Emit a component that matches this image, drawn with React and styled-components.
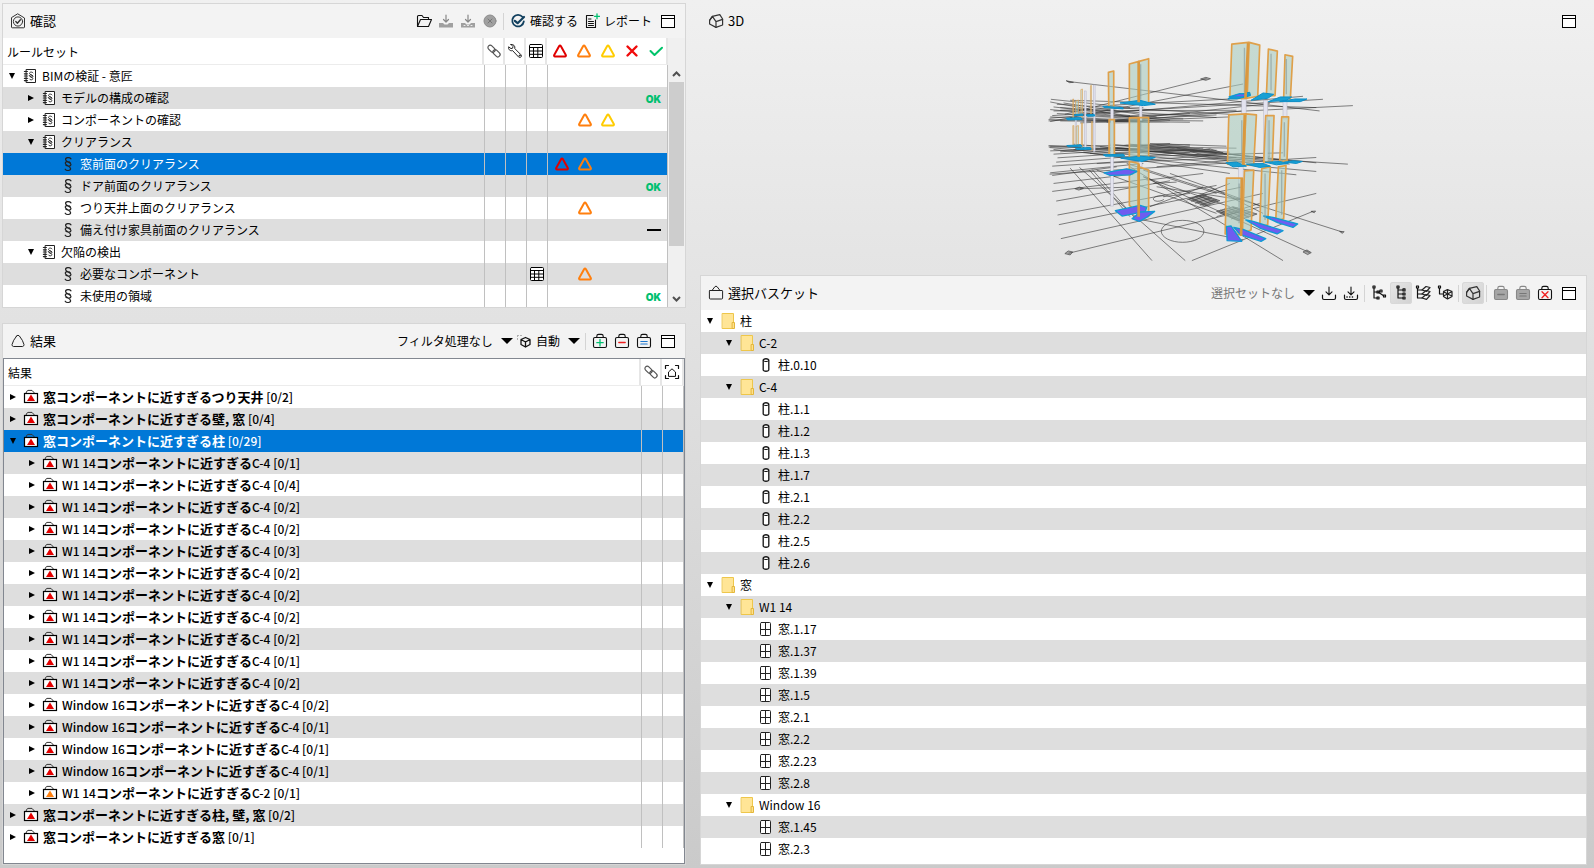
import React from 'react';
import styled, { createGlobalStyle, css } from 'styled-components';

const GlobalStyle = createGlobalStyle`
  * {
    box-sizing: border-box;
  }
  body {
    margin: 0;
    color: #000;
    font-family: 'Noto Sans CJK JP', sans-serif;
    font-size: 12px;
    line-height: 20px;
  }
  button,
  select {
    margin: 0;
    padding: 0;
    border: 0;
    background: none;
    color: inherit;
    font: inherit;
  }
  svg {
    display: block;
    flex: none;
  }
`;

/* ---------- icons ---------- */

function Icon({ children, size = 16, ...rest }) {
  return (
    <svg
      width={size}
      height={size}
      viewBox="0 0 16 16"
      fill="none"
      stroke="#111"
      strokeLinecap="round"
      strokeLinejoin="round"
      aria-hidden="true"
      {...rest}
    >
      {children}
    </svg>
  );
}

const CheckingIcon = () => (
  <Icon stroke="#333">
    <path d="M8 1 L14.5 5 V14 a.8 .8 0 0 1 -.8 .8 H2.3 a.8 .8 0 0 1 -.8 -.8 V5 Z" />
    <circle cx="8" cy="8.5" r="4.6" />
    <path d="M5.8 8.6 L7.4 10.2 L10.4 6.8" strokeWidth="1.4" />
  </Icon>
);
const FolderOpenIcon = () => (
  <Icon strokeWidth="1.1">
    <path d="M1.5 13.5 V3.5 a1 1 0 0 1 1-1 H6 L7.5 4.5 H12.5 V6.5 M1.5 13.5 L4.5 6.5 H15.5 L12.5 13.5 Z" />
  </Icon>
);
const DisabledDownloadIcon = ({ dots }) => (
  <Icon stroke="#888">
    <path d="M8 2 V9 M5.5 6.5 L8 9 L10.5 6.5" strokeWidth="1.2" />
    <path d="M1 10 H5 L6.5 11.5 H9.5 L11 10 H15 V14.5 H1 Z" fill="#a0a0a0" stroke="none" />
    {dots && <path d="M4 12.5 H12" stroke="#eee" strokeDasharray="1 2.5" />}
  </Icon>
);
const DownloadIcon = ({ dots }) => (
  <Icon>
    <path d="M8 2 V9.5 M5 6.8 L8 9.8 L11 6.8" strokeWidth="1.1" />
    <path d="M1.5 10 V13 a1.5 1.5 0 0 0 1.5 1.5 H13 a1.5 1.5 0 0 0 1.5 -1.5 V10" strokeWidth="1.2" />
    {dots && <path d="M4 12 H12" strokeWidth="1.6" strokeDasharray=".1 2.6" />}
  </Icon>
);
const StopIcon = () => (
  <Icon>
    <circle cx="8" cy="8" r="6" fill="#a0a0a0" stroke="#8c8c8c" />
    <path d="M6 6 L10 10 M10 6 L6 10" stroke="#777" />
  </Icon>
);
const CheckIcon = () => (
  <Icon stroke="#12405f">
    <path d="M12.6 4 A5.8 5.8 0 1 0 13.8 8.5" strokeWidth="1.8" />
    <path d="M4.8 7.8 L7.6 10.2 L14 4" strokeWidth="2.2" />
  </Icon>
);
const ReportIcon = () => (
  <Icon>
    <path d="M9 2.5 H2.5 V14.5 H11.5 V7" strokeWidth="1.1" />
    <path d="M4.5 6 H7 M4.5 8.5 H9.5 M4.5 10.5 H9.5 M4.5 12.5 H9.5" />
    <path d="M13 .8 V5.8 M10.5 3.3 H15.5" stroke="#00c070" strokeWidth="1.3" />
  </Icon>
);
const WindowIcon = () => (
  <Icon strokeLinejoin="miter" shapeRendering="crispEdges" stroke="#000">
    <path d="M1.5 2.5 H14.5 V14.5 H1.5 Z M1.5 5.5 H14.5" fill="#fff" />
  </Icon>
);
const LinkIcon = () => (
  <Icon stroke="#555" strokeWidth="1.2">
    <rect x="1.4" y="3.4" width="8.2" height="4.6" rx="2.3" transform="rotate(45 5.5 5.7)" />
    <rect x="6.4" y="8" width="8.2" height="4.6" rx="2.3" transform="rotate(45 10.5 10.3)" />
  </Icon>
);
const WrenchIcon = () => (
  <Icon stroke="#222">
    <path d="M4 1.4 L6 3.6 L5.6 5.2 L4 5.6 L1.6 3.8 C1 6 2.8 8.4 5.6 7.6 L11.6 14 C13.2 15.4 15.4 13.4 14 11.8 L7.8 5.6 C8.4 3 6.4 1 4 1.4 Z" />
    <circle cx="12.6" cy="12.6" r=".5" />
  </Icon>
);
const GridIcon = () => (
  <Icon strokeLinejoin="miter" stroke="#000">
    <rect x="1.5" y="1.5" width="13" height="13" rx="1" fill="#fff" />
    <path d="M1.5 4.5 H14.5 M1.5 8 H14.5 M1.5 11.3 H14.5 M5.5 4.5 V14.5 M9.8 4.5 V14.5" />
  </Icon>
);
const TriangleIcon = ({ color }) => (
  <Icon stroke={color} strokeWidth="2">
    <path d="M7.2 3 L2.2 12 a1 1 0 0 0 .8 1.5 H13 a1 1 0 0 0 .8 -1.5 L8.8 3 a1 1 0 0 0 -1.6 0 Z" />
  </Icon>
);
const CrossIcon = () => (
  <Icon stroke="#f00a0a" strokeWidth="2.4">
    <path d="M3.5 3.5 L12.5 12.5 M12.5 3.5 L3.5 12.5" />
  </Icon>
);
const TickIcon = () => (
  <Icon stroke="#00c46a" strokeWidth="2">
    <path d="M2.5 8 L6.5 12 L14 4.8" />
  </Icon>
);
const ResultsIcon = () => (
  <Icon stroke="#222">
    <path d="M6.6 3 a1.8 1.8 0 0 1 2.8 0 Q13 7.4 14 11.6 a1.8 1.8 0 0 1 -1.4 1.9 H3.4 a1.8 1.8 0 0 1 -1.4 -1.9 Q3 7.4 6.6 3 Z" />
  </Icon>
);
const AutoIcon = () => (
  <Icon>
    <path d="M1.5 2.5 H7 M1.5 2.5 V8" stroke="#aaa" strokeDasharray="1 2" />
    <path d="M9.5 4.5 L14 6.5 V11.5 L9.5 14 L5 11.5 V6.5 Z M5 6.5 L9.5 9 L14 6.5 M9.5 9 V14" strokeWidth="1.3" />
  </Icon>
);
const BagIcon = ({ sign, color, disabled }) => (
  <Icon stroke={disabled ? '#888' : '#111'} strokeWidth="1.1">
    <rect x="1.5" y="4.5" width="13" height="10" rx="1.4" fill={disabled ? '#a6a6a6' : 'none'} />
    <path d="M4.8 4.5 V3.2 a1.8 1.8 0 0 1 1.8 -1.8 H9.4 a1.8 1.8 0 0 1 1.8 1.8 V4.5" />
    {sign === 'plus' && <path d="M8 6.5 V13 M4.8 9.7 H11.2" stroke={color} strokeWidth="1.3" />}
    {sign === 'minus' && <path d="M4.8 9.5 H11.2" stroke={color} strokeWidth="1.3" />}
    {sign === 'equal' && <path d="M4.8 8.5 H11.2 M4.8 11 H11.2" stroke={color} />}
    {sign === 'cross' && <path d="M5 6.8 L11 12.8 M11 6.8 L5 12.8" stroke={color} strokeWidth="1.3" />}
  </Icon>
);
const BasketIcon = () => (
  <Icon stroke="#222">
    <path d="M2 5.5 H14 a.6 .6 0 0 1 .6 .6 V13 a1 1 0 0 1 -1 1 H2.4 a1 1 0 0 1 -1 -1 V6.1 a.6 .6 0 0 1 .6 -.6 Z" />
    <path d="M4 5.5 L6.8 1.8 a1.6 1.6 0 0 1 2.4 0 L12 5.5" />
  </Icon>
);
const FocusIcon = () => (
  <Icon>
    <path d="M1.5 4.5 V1.5 H4.5 M11.5 1.5 H14.5 V4.5 M14.5 11.5 V14.5 H11.5 M4.5 14.5 H1.5 V11.5" strokeWidth="1.2" />
    <path d="M4.5 12 V8 L8 4.8 L11.5 8 V12 Z" />
  </Icon>
);
const HouseIcon = () => (
  <Icon stroke="#333" strokeWidth="1.2">
    <path d="M4.4 3.4 L11.8 1.6 L14.6 6 V12 L8 14.4 L1.6 11 V7.4 Z" />
    <path d="M1.6 7.4 L4.4 3.4 L8 8.6 L14.6 6.4 M8 8.6 V14.4" />
  </Icon>
);
const FolderIcon = () => (
  <Icon>
    <path d="M2.5 .5 H13.5 V15.5 H2.5 Z" fill="#ffe596" stroke="#eec64a" />
    <path d="M12.5 9.5 H14.5 V15.5 H12.5 Z" fill="#ffe08a" stroke="#e3b63a" />
  </Icon>
);
const ColumnIcon = () => (
  <Icon strokeWidth="1.3">
    <path d="M5.2 3 a2.9 1.7 0 0 1 5.6 0 V13 a2.9 1.7 0 0 1 -5.6 0 Z" fill="#fff" />
    <path d="M5.2 3.4 a2.9 1.6 0 0 0 5.6 0" strokeWidth="1" />
  </Icon>
);
const WindowItemIcon = () => (
  <Icon stroke="#222">
    <rect x="2.5" y="1.5" width="10" height="13" rx="1" fill="#fff" />
    <path d="M7.5 1.5 V14.5 M2.5 8.5 H12.5" />
  </Icon>
);
const RulesetIcon = () => (
  <Icon stroke="#222">
    <rect x="4.5" y="1.5" width="9" height="13" fill="#fff" />
    <path d="M2.4 3.5 H5.4 M2.4 5.8 H5.4 M2.4 8 H5.4 M2.4 10.3 H5.4 M2.4 12.6 H5.4" strokeWidth="1.2" />
    <path d="M11 4.8 C10 3.4 7.2 4 7.6 5.6 C8 7 11.2 7 11 8.6 C10.8 9.6 8.4 9.4 7.6 8 M7.4 11 C8.4 12.6 11.2 12 10.8 10.4 C10.4 9 7.4 9 7.4 7.6 C7.6 6.4 10 6.6 10.8 7.8" strokeWidth=".9" />
  </Icon>
);
const RuleIcon = () => (
  <Icon stroke="#222" strokeWidth="1.2">
    <path d="M11 2.8 C9.6 1 5.4 1.4 5.6 3.6 C5.8 6.2 11.2 6.2 11 8.8 C10.8 10.8 6.6 10.2 5.8 9.2 M5.2 13.2 C6.4 15.2 10.8 14.8 10.6 12.6 C10.4 10 5 9.4 5.2 7 C5.4 5.2 9.2 5.4 10.4 6.8" />
  </Icon>
);
const IssueIcon = ({ color = '#e30000' }) => (
  <Icon stroke="#000" strokeLinejoin="miter">
    <path d="M3 4 L4.2 1.8 a1 1 0 0 1 .8 -.4 H9 L11.4 4" stroke="#333" />
    <rect x="1.5" y="4.5" width="13" height="9" fill="#fff" strokeWidth="1.2" />
    <path d="M8 5.4 L12 12 H4 Z" fill={color} stroke="none" />
  </Icon>
);
const FlatTreeIcon = () => (
  <Icon strokeWidth="1.2">
    <path d="M3 3 V13 H7 M3 7 H7 L13 11" />
    <path d="M2 1 H4 V3 H2 Z M6 6 H8 V8 H6 Z M6 12 H8 V14 H6 Z M9 5 H11 V7 H9 Z M12.5 10 H14.5 V12 H12.5 Z" />
  </Icon>
);
const TreeIcon = () => (
  <Icon strokeWidth="1.2">
    <path d="M5 3 V13 H10 M5 5 H10 M5 9 H10" />
    <path d="M4 1 H6 V3 H4 Z M10 3.8 H12 V6 H10 Z M10 8 H12 V10 H10 Z M10 12 H12 V14 H10 Z" />
  </Icon>
);
const LayerTreeIcon = () => (
  <Icon strokeWidth="1.2">
    <path d="M2.5 3 V13 H7 M2.5 5 H7 M2.5 9 H7 M1.5 1 H3.5 V3 H1.5 Z" />
    <path d="M7 5 L11 1.5 L15 2.5 L11.5 6.4 Z M7 9 L11 5.5 L15 6.5 L11.5 10.4 Z M7 13 L11 9.5 L15 10.5 L11.5 14.4 Z" stroke="#222" />
  </Icon>
);
const CubeTreeIcon = () => (
  <Icon strokeWidth="1.2">
    <path d="M2.5 3 V9 H6 M1.5 1 H3.5 V3 H1.5 Z" />
    <path d="M10.5 4.5 L15 6.5 V11.5 L10.5 14 L6.5 11.5 V6.5 Z M6.5 6.5 L10.5 9 L15 6.5 M10.5 4.5 V14 M6.5 11 L10.5 9 L15 11" stroke="#222" />
  </Icon>
);

/* ---------- panels ---------- */

const Page = styled.main`
  min-height: 100vh;
  display: grid;
  grid-template-columns: minmax(0, 684fr) minmax(0, 887fr);
  gap: 14px;
  padding: 3px 7px 3px 2px;
  background: linear-gradient(#f0f0f0, #cacaca);
`;
const Column = styled.div`
  display: flex;
  flex-direction: column;
  gap: ${(p) => (p.$joined ? 0 : 15)}px;
`;
const Panel = styled.section`
  display: flex;
  flex-direction: column;
  flex: ${(p) => (p.$grow ? 1 : 'none')};
  border: 1px solid ${(p) => (p.$bare ? 'transparent' : '#d6d6d6')};
  background: ${(p) => (p.$bare ? 'none' : '#fff')};
`;
const PanelHeader = styled.header`
  display: flex;
  align-items: center;
  justify-content: space-between;
  height: 34px;
  padding: 0 6px 0 7px;
  background: ${(p) => (p.$bare ? 'none' : '#f3f3f3')};
`;
const Title = styled.h2`
  display: flex;
  align-items: center;
  gap: 4px;
  margin: 0;
  font-size: 13px;
  font-weight: 400;
`;
const Toolbar = styled.div`
  display: flex;
  align-items: center;
`;
const ToolButton = styled.button`
  display: flex;
  align-items: center;
  justify-content: center;
  width: 22px;
  height: 22px;
  border-radius: 3px;
  ${(p) =>
    p.$active &&
    css`
      background: linear-gradient(135deg, #e6e6e6, #d2d2d2);
      box-shadow: inset 0 0 0 1px #d8d8d8;
    `}
`;
const TextButton = styled.button`
  display: flex;
  align-items: center;
  gap: 4px;
  margin: 0 3px;
`;
const Separator = styled.span`
  width: 1px;
  height: 17px;
  margin: 0 3px 0 2px;
  background: #d4d4d4;
`;
const Gap = styled.span`
  width: 2px;
`;
const Picker = styled.label`
  position: relative;
  display: flex;
  align-items: center;
  gap: 4px;
  margin-right: 3px;
  color: ${(p) => (p.$muted ? '#777' : '#000')};
  select {
    appearance: none;
    padding-right: 19px;
    outline: 0;
  }
`;
const PickerArrow = styled.svg`
  position: absolute;
  right: 0;
  pointer-events: none;
`;

function Select({ icon, label, value, muted }) {
  return (
    <Picker $muted={muted}>
      {icon}
      <select aria-label={label} defaultValue={value}>
        <option>{value}</option>
      </select>
      <PickerArrow width="12" height="6" viewBox="0 0 12 6">
        <path d="M0 0 H12 L6 6 Z" />
      </PickerArrow>
    </Picker>
  );
}

function Tool({ label, active, children }) {
  return (
    <ToolButton type="button" aria-label={label} $active={active}>
      {children}
    </ToolButton>
  );
}

/* ---------- tree tables ---------- */

const rowColor = (p) => (p.$selected ? '#0078d7' : p.$striped ? '#dedede' : '#fff');

const TableArea = styled.div`
  display: flex;
  flex: 1;
  align-items: ${(p) => (p.$framed ? 'flex-start' : 'stretch')};
  ${(p) => p.$framed && 'border: 1px solid #828790; background: #fff;'}
`;
const Table = styled.table`
  flex: 1;
  width: 100%;
  table-layout: fixed;
  border-spacing: 0;
  th,
  td {
    padding: 0;
  }
  th {
    height: 27px;
    border-bottom: 1px solid #ececec;
    border-right: 2px solid #e6e6e6;
    font-weight: 400;
    text-align: left;
  }
  th:first-child {
    padding-top: 1px;
    padding-left: 4px;
  }
  td {
    height: 22px;
    border-left: 1px solid #c0c0c0;
  }
  td:first-child {
    border-left: 0;
  }
  td:last-child {
    border-right: 1px solid #c0c0c0;
  }
`;
const Row = styled.tr`
  background: ${rowColor};
  color: ${(p) => (p.$selected ? '#fff' : '#000')};
`;
const Centered = styled.div`
  display: flex;
  justify-content: center;
`;
const StatusGrid = styled.div`
  display: grid;
  grid-template-columns: repeat(5, ${(p) => (p.$head ? 24 : 23)}px);
  padding-left: ${(p) => (p.$head ? 1 : 2)}px;
  align-items: center;
  justify-items: center;
`;
const StatusSlot = styled.span`
  grid-row: 1;
  grid-column: ${(p) => p.$slot};
`;
const Ok = styled.span`
  display: block;
  padding-top: 1px;
  color: #00c070;
  font: 900 10px/16px Inter, sans-serif;
`;
const Dash = styled.span`
  display: block;
  width: 14px;
  height: 2px;
  background: #000;
`;
const TreeCell = styled.div`
  display: flex;
  align-items: center;
  gap: 4px;
  height: 22px;
  padding-left: ${(p) => 3 + p.$level * 19}px;
  white-space: nowrap;
  ${(p) => p.$bold && 'font-size: 13px; font-weight: 700;'}
`;
const Latin = styled.span`
  font-size: 12px;
  font-weight: 500;
`;
const Expander = styled.button`
  display: flex;
  justify-content: center;
  width: 12px;
`;
const NoExpander = styled.span`
  width: 12px;
`;

function TreeItem({ level, open, icon, bold, children }) {
  return (
    <TreeCell $level={level} $bold={bold}>
      {open === undefined ? (
        <NoExpander />
      ) : (
        <Expander type="button" aria-label={open ? '折りたたむ' : '展開'}>
          <svg width="8" height="8" viewBox="0 0 8 8">
            <path d={open ? 'M1 1 H7 L4 7 Z' : 'M1 1 L7 4 L1 7 Z'} />
          </svg>
        </Expander>
      )}
      {icon}
      <span>{children}</span>
    </TreeCell>
  );
}

const RED = '#e00000';
const ORANGE = '#ff7f0e';
const YELLOW = '#ffcc00';

const rules = [
  { level: 0, open: true, name: 'BIMの検証 - 意匠' },
  { level: 1, open: false, name: 'モデルの構成の確認', status: ['ok'] },
  { level: 1, open: false, name: 'コンポーネントの確認', status: ['orange', 'yellow'] },
  { level: 1, open: true, name: 'クリアランス' },
  { level: 2, name: '窓前面のクリアランス', status: ['red', 'orange'], selected: true },
  { level: 2, name: 'ドア前面のクリアランス', status: ['ok'] },
  { level: 2, name: 'つり天井上面のクリアランス', status: ['orange'] },
  { level: 2, name: '備え付け家具前面のクリアランス', status: ['none'] },
  { level: 1, open: true, name: '欠陥の検出' },
  { level: 2, name: '必要なコンポーネント', status: ['orange'], table: true },
  { level: 2, name: '未使用の領域', status: ['ok'] },
];

const statuses = {
  red: { slot: 1, mark: <TriangleIcon color={RED} /> },
  orange: { slot: 2, mark: <TriangleIcon color={ORANGE} /> },
  yellow: { slot: 3, mark: <TriangleIcon color={YELLOW} /> },
  ok: { slot: 5, mark: <Ok>OK</Ok> },
  none: { slot: 5, mark: <Dash /> },
};

const ScrollBar = styled.div`
  display: flex;
  flex-direction: column;
  align-items: center;
  width: 17px;
  padding: 27px 1px 0 1px;
  background: #f0f0f0;
`;
const ScrollButton = styled.button`
  display: flex;
  align-items: center;
  justify-content: center;
  width: 15px;
  height: 17px;
`;
const ScrollTrack = styled.div`
  flex: 1;
  width: 15px;
`;
const ScrollThumb = styled.div`
  height: 79%;
  background: #cdcdcd;
`;

function ScrollArrow({ down }) {
  return (
    <ScrollButton type="button" aria-label={down ? '下へ' : '上へ'}>
      <svg width="9" height="6" viewBox="0 0 9 6" fill="none" stroke="#505050" strokeWidth="2">
        <path d={down ? 'M1 1 L4.5 4.5 L8 1' : 'M1 5 L4.5 1.5 L8 5'} />
      </svg>
    </ScrollButton>
  );
}

function CheckingPanel() {
  return (
    <Panel>
      <PanelHeader>
        <Title>
          <CheckingIcon />
          確認
        </Title>
        <Toolbar>
          <Tool label="開く"><FolderOpenIcon /></Tool>
          <Tool label="保存"><DisabledDownloadIcon /></Tool>
          <Tool label="名前を付けて保存"><DisabledDownloadIcon dots /></Tool>
          <Tool label="停止"><StopIcon /></Tool>
          <Separator />
          <TextButton type="button">
            <CheckIcon />
            確認する
          </TextButton>
          <TextButton type="button">
            <ReportIcon />
            レポート
          </TextButton>
          <Gap />
          <Tool label="最大化"><WindowIcon /></Tool>
        </Toolbar>
      </PanelHeader>
      <TableArea>
        <Table>
          <colgroup>
            <col />
            <col width="21" />
            <col width="21" />
            <col width="21" />
            <col width="121" />
          </colgroup>
          <thead>
            <tr>
              <th>ルールセット</th>
              <th aria-label="リンク"><Centered><LinkIcon /></Centered></th>
              <th aria-label="設定"><Centered><WrenchIcon /></Centered></th>
              <th aria-label="表"><Centered><GridIcon /></Centered></th>
              <th aria-label="状態">
                <StatusGrid $head>
                  <TriangleIcon color={RED} />
                  <TriangleIcon color={ORANGE} />
                  <TriangleIcon color={YELLOW} />
                  <CrossIcon />
                  <TickIcon />
                </StatusGrid>
              </th>
            </tr>
          </thead>
          <tbody>
            {rules.map((rule, i) => (
              <Row key={rule.name} $striped={i % 2 === 1} $selected={rule.selected}>
                <td>
                  <TreeItem
                    level={rule.level}
                    open={rule.open}
                    icon={rule.open === undefined ? <RuleIcon /> : <RulesetIcon />}
                  >
                    {rule.name}
                  </TreeItem>
                </td>
                <td />
                <td />
                <td>{rule.table && <Centered><GridIcon /></Centered>}</td>
                <td>
                  <StatusGrid>
                    {(rule.status || []).map((s) => (
                      <StatusSlot key={s} $slot={statuses[s].slot}>
                        {statuses[s].mark}
                      </StatusSlot>
                    ))}
                  </StatusGrid>
                </td>
              </Row>
            ))}
          </tbody>
        </Table>
        <ScrollBar>
          <ScrollArrow />
          <ScrollTrack>
            <ScrollThumb />
          </ScrollTrack>
          <ScrollArrow down />
        </ScrollBar>
      </TableArea>
    </Panel>
  );
}

const near = (a, b, count) => ({ a, b, count });
const isLatin = (text) => /^[A-Z]/.test(text);

const results = [
  { level: 0, open: false, ...near('窓', 'つり天井', 2) },
  { level: 0, open: false, ...near('窓', '壁, 窓', 4) },
  { level: 0, open: true, ...near('窓', '柱', 29), selected: true },
  ...[1, 4, 2, 2, 3, 2, 2, 2, 2, 1, 2].map((n) => ({ level: 1, open: false, ...near('W1 14', 'C-4', n) })),
  ...[2, 1, 1, 1].map((n) => ({ level: 1, open: false, ...near('Window 16', 'C-4', n) })),
  { level: 1, open: false, ...near('W1 14', 'C-2', 1), color: ORANGE },
  { level: 0, open: false, ...near('窓', '柱, 壁, 窓', 2) },
  { level: 0, open: false, ...near('窓', '窓', 1) },
];

const Part = ({ text }) => (isLatin(text) ? <Latin>{text}</Latin> : text);

function ResultsPanel() {
  return (
    <Panel $grow>
      <PanelHeader>
        <Title>
          <ResultsIcon />
          結果
        </Title>
        <Toolbar>
          <Select label="フィルタ" value="フィルタ処理なし" />
          <Select label="表示" value="自動" icon={<AutoIcon />} />
          <Separator />
          <Tool label="追加"><BagIcon sign="plus" color="#00c070" /></Tool>
          <Tool label="削除"><BagIcon sign="minus" color="#f02020" /></Tool>
          <Tool label="設定"><BagIcon sign="equal" color="#1f78d0" /></Tool>
          <Gap />
          <Tool label="最大化"><WindowIcon /></Tool>
        </Toolbar>
      </PanelHeader>
      <TableArea $framed>
        <Table>
          <colgroup>
            <col />
            <col width="21" />
            <col width="22" />
          </colgroup>
          <thead>
            <tr>
              <th>結果</th>
              <th aria-label="リンク"><Centered><LinkIcon /></Centered></th>
              <th aria-label="表示"><Centered><FocusIcon /></Centered></th>
            </tr>
          </thead>
          <tbody>
            {results.map((result, i) => (
              <Row key={i} $striped={i % 2 === 1} $selected={result.selected}>
                <td>
                  <TreeItem bold level={result.level} open={result.open} icon={<IssueIcon color={result.color} />}>
                    <Part text={result.a} />
                    コンポーネントに近すぎる
                    <Part text={result.b} />
                    <Latin> [0/{result.count}]</Latin>
                  </TreeItem>
                </td>
                <td />
                <td />
              </Row>
            ))}
          </tbody>
        </Table>
      </TableArea>
    </Panel>
  );
}

/* ---------- 3D view ---------- */

const Viewport = styled.svg`
  width: 100%;
  height: 236px;
`;

// x1, y1, x2, y2
const upperLines = [
  [110, 183, 870, 272], [104, 282, 530, 175], [60, 304, 640, 191], [55, 302, 970, 256], [62, 237, 300, 262],
  [80, 252, 600, 282], [90, 262, 560, 292], [70, 272, 620, 270], [66, 286, 880, 237], [58, 294, 820, 228],
  [120, 240, 860, 262], [60, 268, 420, 300], [90, 302, 480, 306], [150, 308, 600, 290], [100, 248, 380, 290],
  [240, 255, 600, 236], [260, 300, 720, 250], [60, 245, 330, 296], [170, 299, 520, 302], [80, 280, 460, 296],
  [55, 298, 340, 304], [60, 290, 360, 306], [70, 260, 300, 286], [200, 302, 560, 284], [230, 306, 640, 272],
  [120, 292, 480, 280], [90, 270, 340, 262],
];
const middleLines = [
  [55, 376, 955, 432], [58, 382, 860, 454], [70, 388, 800, 464], [70, 402, 480, 378], [82, 413, 520, 384],
  [78, 426, 560, 390], [66, 438, 640, 400], [58, 462, 860, 412], [60, 378, 480, 374], [130, 372, 700, 420],
  [160, 396, 600, 460], [210, 380, 780, 432], [240, 372, 560, 400], [300, 372, 860, 428], [90, 395, 420, 370],
  [330, 380, 620, 384], [350, 408, 760, 398], [380, 440, 720, 410], [60, 458, 340, 430], [380, 374, 660, 410],
  [55, 380, 300, 386], [60, 392, 330, 384], [130, 388, 480, 396], [180, 400, 540, 388], [260, 384, 600, 396],
  [320, 396, 700, 432], [360, 370, 590, 378], [400, 396, 640, 424], [440, 384, 760, 420], [200, 430, 620, 412],
];
const groundLines = [
  [70, 490, 310, 462], [66, 514, 360, 476], [78, 543, 420, 482], [82, 585, 560, 496], [86, 614, 640, 500],
  [92, 656, 700, 520], [115, 700, 860, 520], [486, 722, 850, 574], [120, 444, 366, 722], [148, 442, 466, 722],
  [178, 450, 300, 590], [290, 430, 938, 636], [340, 470, 840, 698], [300, 440, 760, 722], [340, 600, 640, 660],
  [150, 506, 330, 500], [200, 450, 560, 580], [340, 470, 600, 560], [380, 500, 640, 540], [420, 460, 700, 560],
  [360, 560, 520, 500], [540, 500, 700, 580], [560, 590, 690, 550], [350, 480, 520, 460], [470, 540, 600, 490],
  [66, 466, 260, 440], [186, 448, 320, 600], [340, 450, 560, 520], [400, 530, 480, 520], [370, 490, 440, 486],
];
const hatchLines = [
  [486, 534, 534, 556], [496, 530, 544, 552], [506, 527, 554, 548], [516, 524, 564, 544], [484, 544, 530, 526],
  [496, 550, 546, 532], [510, 556, 560, 538], [572, 570, 632, 600], [584, 567, 646, 596], [596, 564, 658, 592],
  [608, 561, 670, 588], [570, 580, 624, 563], [586, 588, 644, 568], [604, 597, 664, 575],
];
const farGlass = [
  '128,236 130,236 130,294 128,294', '136,242 145,239 145,284 136,284', '152,208 157,206 157,290 152,290',
  '181,196 184,195 184,284 181,284', '128,316 131,316 131,374 128,374', '138,318 145,316 145,374 138,374',
  '154,308 157,308 157,384 154,384', '184,304 187,304 187,390 184,390',
];
const glass = [
  '235,156 251,152 251,260 236,262', '298,131 327,123 327,246 298,246', '327,123 356,115 356,250 327,246',
  '606,71 656,66 652,234 600,234', '658,66 690,74 684,228 652,234',
  '716,86 743,92 736,226 710,226', '766,103 789,108 782,236 762,232',
  '237,298 253,298 253,404 237,404', '298,293 327,292 327,412 298,412', '327,292 356,292 356,412 327,412',
  '597,284 648,281 642,436 593,432', '648,281 680,284 672,432 642,436', '708,286 733,286 728,424 702,426',
  '756,290 777,290 772,422 750,424',
  '298,424 326,430 326,580 298,556', '326,440 356,450 356,590 326,584', '590,474 638,474 634,644 586,642',
  '644,452 672,450 664,630 638,640', '696,446 722,440 714,614 690,622', '746,440 769,436 762,596 738,604',
];
const posts = [
  [163, 212, 5, 176], [190, 194, 5, 200], [242, 264, 8, 294], [328, 254, 8, 46], [636, 236, 13, 46],
  [702, 240, 12, 190], [760, 244, 12, 52], [626, 440, 14, 60], [327, 414, 9, 26], [135, 298, 4, 80],
];
const pads = [
  '108,294 152,292 156,298 112,299', '134,283 158,281 158,286 132,286', '168,284 192,282 194,287 172,288',
  '218,258 278,262 280,266 222,262', '270,248 330,240 376,252 340,256', '594,236 618,224 660,216 662,226 622,236',
  '664,240 700,218 732,222 714,234', '716,244 752,230 786,230 770,240', '750,244 796,236 832,236 812,244',
  '110,376 152,374 156,378 114,380', '136,384 180,382 184,387 140,388', '220,404 280,402 284,408 226,408',
  '272,414 330,408 376,412 336,424', '588,428 620,426 650,438 610,440', '650,432 700,430 722,438 690,442',
  '706,426 750,424 776,430 740,434', '764,426 790,422 818,424 800,430',
];
const bluePads = [
  '222,458 290,446 322,454 300,464 240,466', '256,572 330,556 350,562 346,574 276,588',
  '306,596 330,576 374,574 350,592 328,604', '590,620 604,618 636,664 592,662',
  '612,622 640,628 708,656 694,664 632,644', '648,600 670,604 760,632 742,642 690,624',
  '702,588 730,592 804,612 790,622 744,608', '598,230 630,220 660,222 640,230',
];

const Lines = ({ data }) => data.map((l, i) => <line key={i} x1={l[0]} y1={l[1]} x2={l[2]} y2={l[3]} />);
const Polygons = ({ data }) => data.map((points) => <polygon key={points} points={points} />);

function Building() {
  return (
    <Viewport viewBox="-990 55 2661 705" role="img" aria-label="3Dモデル">
      <g stroke="#333" strokeWidth="2.4" strokeOpacity=".75" fill="none">
        <Lines data={upperLines} />
        <Lines data={middleLines} />
        <Lines data={groundLines} />
        <Lines data={hatchLines} />
        <ellipse cx="458" cy="634" rx="64" ry="33" />
        <path d="M404 528 C380 524 362 534 374 542 C384 546 396 542 402 538" />
      </g>
      <g fill="#444" fillOpacity=".4" stroke="#444" strokeWidth="2">
        <path d="M476 538 L520 524 L570 542 L524 558 Z" />
        <path d="M560 574 L610 560 L682 582 L624 602 Z" />
        <path d="M480 394 L540 386 L580 398 L520 404 Z" />
        <path d="M150 304 L300 290 L420 306 L260 310 Z" stroke="none" />
        <path d="M280 372 L420 370 L520 388 L400 398 Z" stroke="none" />
        <path d="M104 701 L114 693 L128 696 L120 705 Z M820 696 L832 690 L845 698 L834 704 Z M512 176 L528 171 L542 175 L528 180 Z M134 506 L148 501 L160 505 L146 510 Z" />
        <path d="M108 181 L130 186 L118 187 Z M930 634 L944 635 L938 640 Z M844 574 L858 573 L854 578 Z" />
      </g>
      <g fill="#e3e3ef" stroke="#b4b4c4" strokeWidth="1.5">
        {posts.map((p, i) => (
          <rect key={i} x={p[0]} y={p[1]} width={p[2]} height={p[3]} />
        ))}
      </g>
      <g fill="#a9cbbd" fillOpacity=".5" stroke="#dca458" strokeWidth="2">
        <Polygons data={farGlass} />
      </g>
      <g fill="#a9cbbd" fillOpacity=".58" stroke="#dfa04a" strokeWidth="5" strokeLinejoin="round">
        <Polygons data={glass} />
      </g>
      <g fill="#18a0d4" stroke="#0c8fc8" strokeWidth="3" strokeLinejoin="round">
        <Polygons data={pads} />
      </g>
      <g fill="#6f5cf0" stroke="#0f9ad4" strokeWidth="4" strokeLinejoin="round">
        <Polygons data={bluePads} />
      </g>
      <path
        d="M644 82 V216 M332 132 V238 M332 306 V400 M636 300 V420 M724 100 V210 M770 116 V222 M718 300 V410 M764 306 V410 M628 490 V610 M706 460 V600 M756 450 V584"
        stroke="#8d9fa0"
        strokeWidth="4"
        strokeOpacity=".7"
      />
      <path d="M655 68 L647 234 M645 284 L640 434 M636 474 L634 648 M326 124 V246 M326 294 V410 M326 432 V590" stroke="#d9983f" strokeWidth="8" />
    </Viewport>
  );
}

function ModelPanel() {
  return (
    <Panel $bare>
      <PanelHeader $bare>
        <Title>
          <HouseIcon />
          3D
        </Title>
        <Tool label="最大化"><WindowIcon /></Tool>
      </PanelHeader>
      <Building />
    </Panel>
  );
}

/* ---------- selection basket ---------- */

const List = styled.ul`
  margin: 0;
  padding: 0 0 4px;
  list-style: none;
`;
const ListRow = styled.li`
  background: ${rowColor};
`;

const leaves = (kind, ids) => ids.map((id) => ({ level: 2, kind, name: `${kind}.${id}` }));

const basket = [
  { level: 0, open: true, name: '柱' },
  { level: 1, open: true, name: 'C-2' },
  ...leaves('柱', ['0.10']),
  { level: 1, open: true, name: 'C-4' },
  ...leaves('柱', ['1.1', '1.2', '1.3', '1.7', '2.1', '2.2', '2.5', '2.6']),
  { level: 0, open: true, name: '窓' },
  { level: 1, open: true, name: 'W1 14' },
  ...leaves('窓', ['1.17', '1.37', '1.39', '1.5', '2.1', '2.2', '2.23', '2.8']),
  { level: 1, open: true, name: 'Window 16' },
  ...leaves('窓', ['1.45', '2.3']),
];

const kindIcons = { 柱: <ColumnIcon />, 窓: <WindowItemIcon /> };

function BasketPanel() {
  return (
    <Panel $grow>
      <PanelHeader>
        <Title>
          <BasketIcon />
          選択バスケット
        </Title>
        <Toolbar>
          <Select muted label="選択セット" value="選択セットなし" />
          <Tool label="保存"><DownloadIcon /></Tool>
          <Tool label="名前を付けて保存"><DownloadIcon dots /></Tool>
          <Separator />
          <Tool label="フラット"><FlatTreeIcon /></Tool>
          <Tool label="階層" active><TreeIcon /></Tool>
          <Tool label="レイヤー"><LayerTreeIcon /></Tool>
          <Tool label="コンポーネント"><CubeTreeIcon /></Tool>
          <Separator />
          <Tool label="3D表示" active><HouseIcon /></Tool>
          <Separator />
          <Tool label="削除"><BagIcon sign="minus" color="#777" disabled /></Tool>
          <Tool label="設定"><BagIcon sign="equal" color="#777" disabled /></Tool>
          <Tool label="空にする"><BagIcon sign="cross" color="#f02020" /></Tool>
          <Gap />
          <Tool label="最大化"><WindowIcon /></Tool>
        </Toolbar>
      </PanelHeader>
      <List>
        {basket.map((item, i) => (
          <ListRow key={i} $striped={i % 2 === 1}>
            <TreeItem level={item.level} open={item.open} icon={kindIcons[item.kind] || <FolderIcon />}>
              {item.name}
            </TreeItem>
          </ListRow>
        ))}
      </List>
    </Panel>
  );
}

export default function App() {
  return (
    <>
      <GlobalStyle />
      <Page>
        <Column>
          <CheckingPanel />
          <ResultsPanel />
        </Column>
        <Column $joined>
          <ModelPanel />
          <BasketPanel />
        </Column>
      </Page>
    </>
  );
}
